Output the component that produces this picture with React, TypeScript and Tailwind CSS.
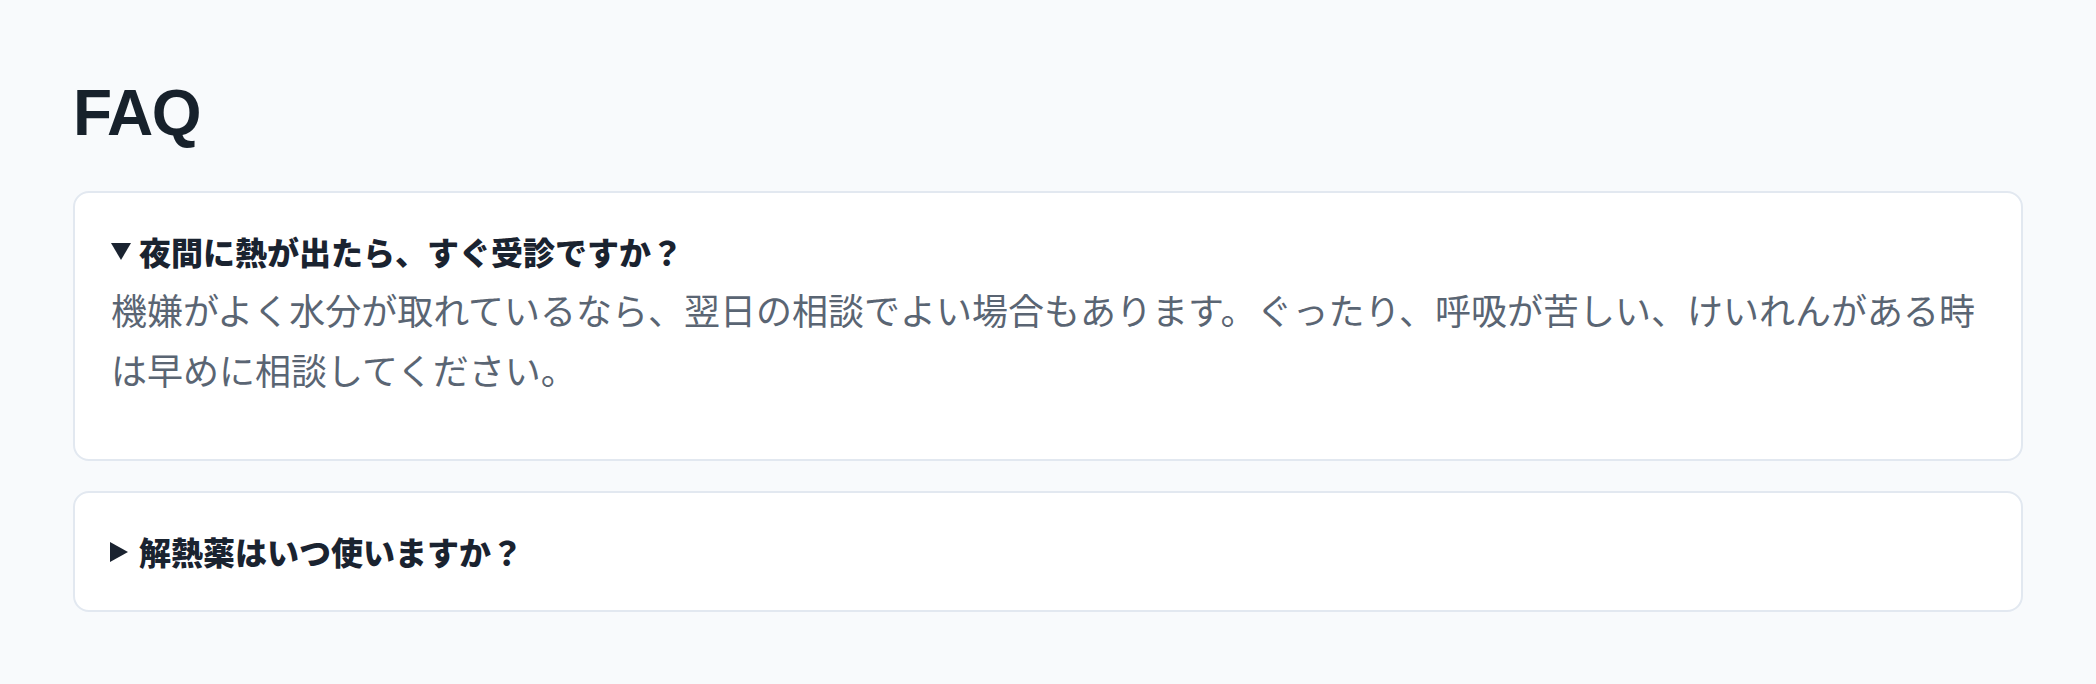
import React from "react";

const jp = { fontFamily: '"Noto Sans CJK JP", "Noto Sans", sans-serif' };

function Down() {
  return (
    <svg width="20" height="17" viewBox="0 0 20 17" className="mr-[8px] shrink-0">
      <polygon points="0,0 20,0 10,17" fill="#1a2330" />
    </svg>
  );
}

function Right() {
  return (
    <svg width="18" height="20" viewBox="0 0 18 20" className="ml-[-1px] mr-[11px] shrink-0">
      <polygon points="0,0 18,10 0,20" fill="#1a2330" />
    </svg>
  );
}

export default function App() {
  return (
    <div className="min-h-screen bg-[#f8fafc] px-[73px] pt-[81px] pb-[72px]">
      <h1
        className="text-[64px] leading-[64px] font-bold text-[#17212b] tracking-[-1.5px] mb-[46px]"
        style={{ fontFamily: '"Liberation Sans", Arial, sans-serif' }}
      >
        FAQ
      </h1>
      <div className="flex flex-col gap-[30px]" style={jp}>
        <div className="rounded-[16px] border-2 border-[#e2e8f0] bg-white px-[36px] py-[35px]">
          <div className="flex items-center h-[47px] text-[32px] leading-[47px] font-black text-[#1a2330]">
            <Down />
            <span>夜間に熱が出たら、すぐ受診ですか？</span>
          </div>
          <p className="mt-[4px] mb-[25px] text-[36px] leading-[60px] text-[#5a6573]">
            機嫌がよく水分が取れているなら、翌日の相談でよい場合もあります。ぐったり、呼吸が苦しい、けいれんがある時は早めに相談してください。
          </p>
        </div>
        <div className="rounded-[16px] border-2 border-[#e2e8f0] bg-white px-[36px] py-[35px]">
          <div className="flex items-center h-[47px] text-[32px] leading-[47px] font-black text-[#1a2330]">
            <Right />
            <span>解熱薬はいつ使いますか？</span>
          </div>
        </div>
      </div>
    </div>
  );
}
